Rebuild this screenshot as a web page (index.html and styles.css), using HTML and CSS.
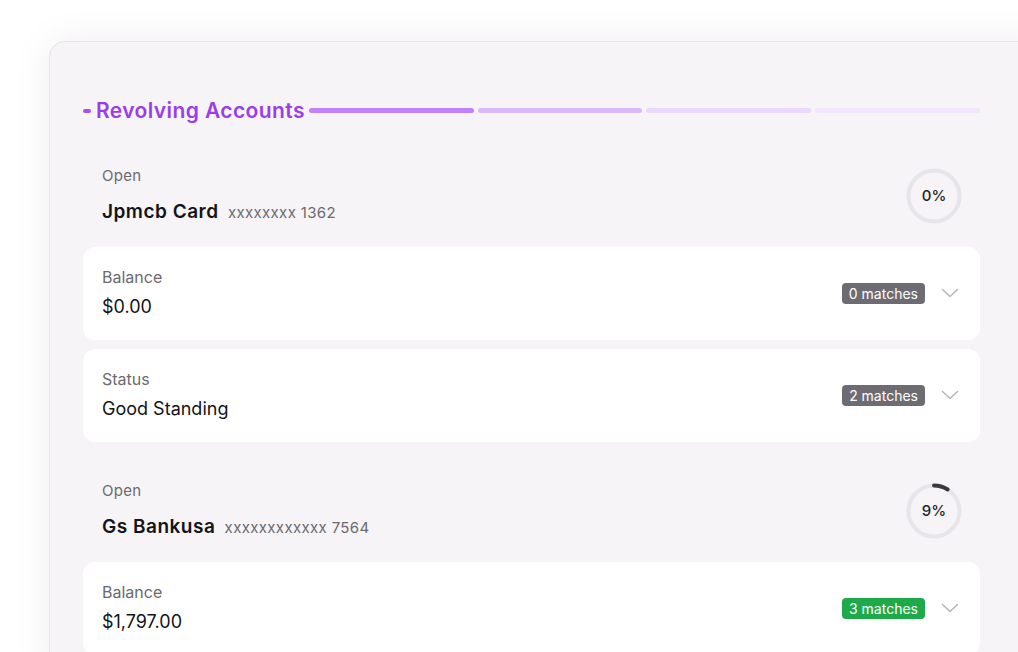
FILE: index.html
```html
<!DOCTYPE html>
<html>
<head>
<meta charset="utf-8">
<link rel="stylesheet" href="styles.css">
</head>
<body>
<div class="card">
  <div class="title-row">
    <span class="dash"></span>
    <h2 class="title">Revolving Accounts</h2>
    <div class="bars">
      <span class="bar b1"></span>
      <span class="bar b2"></span>
      <span class="bar b3"></span>
      <span class="bar b4"></span>
    </div>
  </div>

  <div class="accounts">
    <div class="account">
      <div class="acc-head">
        <div class="acc-info">
          <div class="label">Open</div>
          <div class="acc-name">Jpmcb Card <span class="acc-num">xxxxxxxx 1362</span></div>
        </div>
        <div class="ring">
          <svg width="56" height="56" viewBox="0 0 56 56">
            <circle cx="28" cy="28" r="25.5" fill="none" stroke="#e6e5ea" stroke-width="4"/>
          </svg>
          <span class="ring-text">0%</span>
        </div>
      </div>
      <div class="rows">
        <div class="row">
          <div class="row-info">
            <div class="label">Balance</div>
            <div class="value">$0.00</div>
          </div>
          <div class="row-side">
            <span class="badge gray">0 matches</span>
            <svg class="chev" width="18" height="10" viewBox="0 0 18 10"><path d="M1.5 1.5 L9 8.5 L16.5 1.5" fill="none" stroke="#b4b3b9" stroke-width="1.5" stroke-linecap="round" stroke-linejoin="round"/></svg>
          </div>
        </div>
        <div class="row">
          <div class="row-info">
            <div class="label">Status</div>
            <div class="value">Good Standing</div>
          </div>
          <div class="row-side">
            <span class="badge gray">2 matches</span>
            <svg class="chev" width="18" height="10" viewBox="0 0 18 10"><path d="M1.5 1.5 L9 8.5 L16.5 1.5" fill="none" stroke="#b4b3b9" stroke-width="1.5" stroke-linecap="round" stroke-linejoin="round"/></svg>
          </div>
        </div>
      </div>
    </div>

    <div class="account">
      <div class="acc-head">
        <div class="acc-info">
          <div class="label">Open</div>
          <div class="acc-name">Gs Bankusa <span class="acc-num">xxxxxxxxxxxx 7564</span></div>
        </div>
        <div class="ring">
          <svg width="56" height="56" viewBox="0 0 56 56">
            <circle cx="28" cy="28" r="25.5" fill="none" stroke="#e6e5ea" stroke-width="4"/>
            <circle cx="28" cy="28" r="25.5" fill="none" stroke="#3a393e" stroke-width="4" stroke-linecap="round" stroke-dasharray="14.4 200" transform="rotate(-90 28 28)"/>
          </svg>
          <span class="ring-text">9%</span>
        </div>
      </div>
      <div class="rows">
        <div class="row">
          <div class="row-info">
            <div class="label">Balance</div>
            <div class="value">$1,797.00</div>
          </div>
          <div class="row-side">
            <span class="badge green">3 matches</span>
            <svg class="chev" width="18" height="10" viewBox="0 0 18 10"><path d="M1.5 1.5 L9 8.5 L16.5 1.5" fill="none" stroke="#b4b3b9" stroke-width="1.5" stroke-linecap="round" stroke-linejoin="round"/></svg>
          </div>
        </div>
      </div>
    </div>
  </div>
</div>
</body>
</html>
```

FILE: styles.css
```css
* { box-sizing: border-box; }

html, body {
  margin: 0;
  padding: 0;
  background: #ffffff;
  overflow: hidden;
  height: 652px;
}

body {
  font-family: Inter, "Open Sans", "Liberation Sans", sans-serif;
  color: #1c1b1f;
  padding: 41px 0 0 49px;
}

.card {
  width: 1010px;
  height: 640px;
  background: #f6f4f6;
  border: 1px solid #e4e3e6;
  border-radius: 16px;
  box-shadow: 0 0 40px rgba(0, 0, 0, 0.07);
  padding: 55px 0 0 33px;
  overflow: hidden;
}

.title-row {
  display: flex;
  align-items: center;
  width: 897px;
  height: 28px;
  margin-bottom: 18px;
}

.dash {
  width: 8px;
  height: 4px;
  border-radius: 2px;
  background: #a352f0;
  margin-right: 5px;
}

.title {
  margin: 0;
  font-size: 21px;
  font-weight: 600;
  color: #9a3ee8;
  line-height: 28px;
  letter-spacing: 0.4px;
  white-space: nowrap;
}

.bars {
  flex: 1;
  display: flex;
  gap: 4px;
  margin-left: 4px;
  margin-top: -1px;
}

.bar {
  flex: 1;
  height: 5px;
  border-radius: 3px;
}
.b1 { background: #c081fa; }
.b2 { background: #dab9fb; }
.b3 { background: #ebd9fd; }
.b4 { background: #f2e6fc; }

.accounts {
  width: 897px;
  display: flex;
  flex-direction: column;
  gap: 16px;
}

.acc-head {
  display: flex;
  align-items: center;
  justify-content: space-between;
  padding: 23px 19px 22px 19px;
}

.label {
  font-size: 15px;
  line-height: 20px;
  color: #6b6a70;
  letter-spacing: 0.3px;
}

.acc-name {
  margin-top: 14px;
  font-size: 19px;
  font-weight: 600;
  line-height: 24px;
  color: #141317;
  letter-spacing: 0.5px;
}

.acc-num {
  font-size: 15px;
  font-weight: 400;
  color: #6b6a70;
  letter-spacing: 0.35px;
  margin-left: 4px;
}

.ring {
  position: relative;
  width: 56px;
  height: 56px;
  display: flex;
  align-items: center;
  justify-content: center;
  margin-right: -1px;
}

.ring svg {
  position: absolute;
  left: 0;
  top: 0;
}

.ring-text {
  position: relative;
  font-size: 15px;
  font-weight: 500;
  color: #242328;
}

.rows {
  display: flex;
  flex-direction: column;
  gap: 9px;
}

.row {
  background: #ffffff;
  border-radius: 12px;
  padding: 20px 21px 21px 19px;
  display: flex;
  align-items: center;
  justify-content: space-between;
}

.row .label {
  font-size: 16px;
  letter-spacing: 0;
}

.value {
  margin-top: 8px;
  font-size: 18px;
  line-height: 24px;
  color: #141317;
}

.row-side {
  display: flex;
  align-items: center;
  gap: 16px;
}

.badge {
  font-size: 14px;
  line-height: 21px;
  padding: 0 7px;
  border-radius: 4px;
  color: #ffffff;
  white-space: nowrap;
}
.badge.gray { background: #6d6c73; }
.badge.green { background: #1faa4a; }

.chev { display: block; }
```
